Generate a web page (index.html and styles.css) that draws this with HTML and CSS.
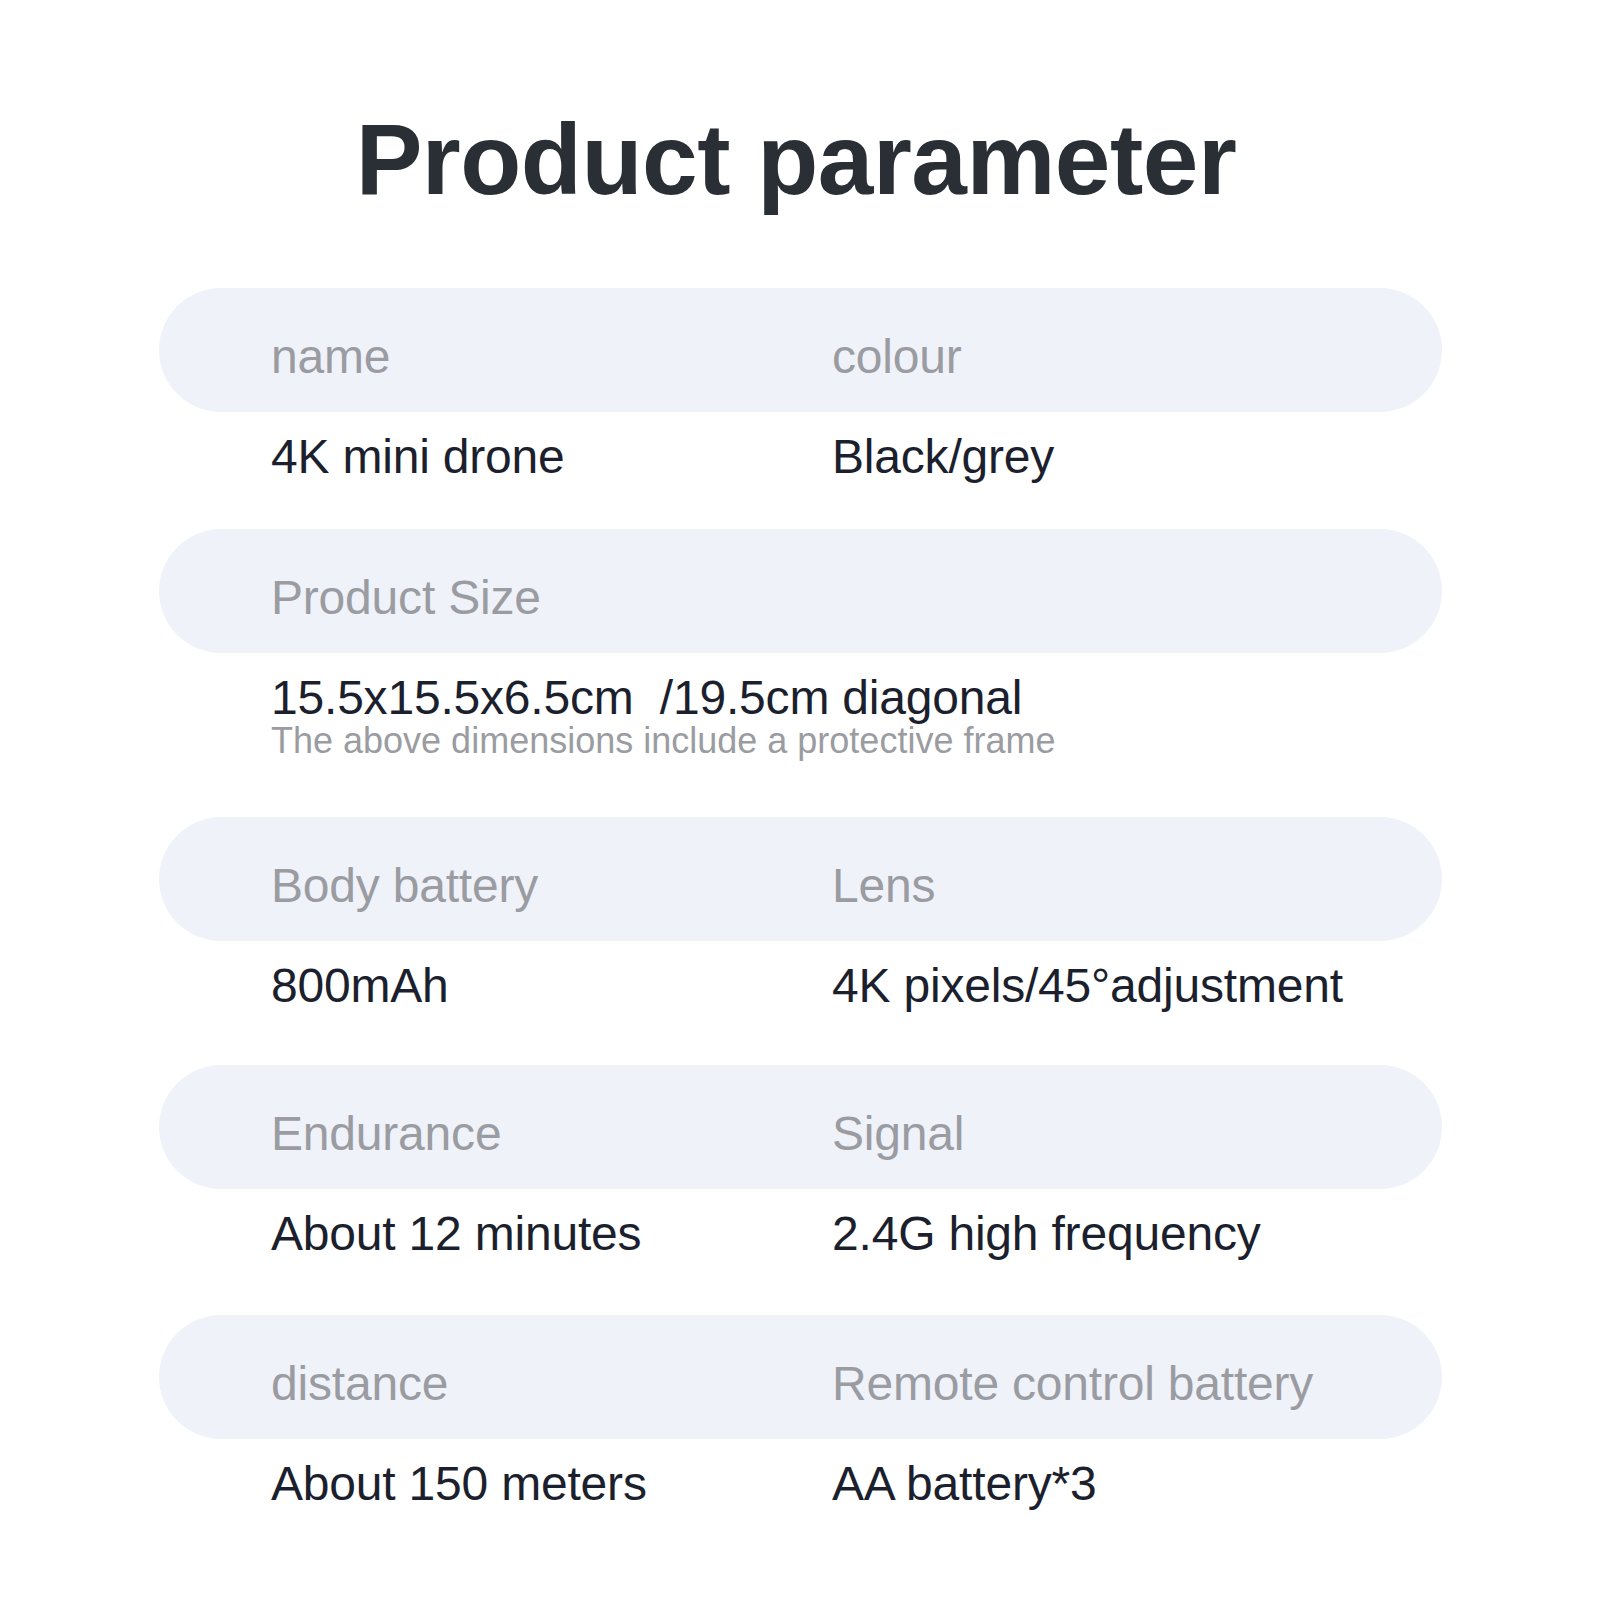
FILE: index.html
```html
<!DOCTYPE html>
<html lang="en">
<head>
<meta charset="utf-8">
<title>Product parameter</title>
<link rel="stylesheet" href="styles.css">
</head>
<body>
<main class="page">
  <h1 class="title">Product parameter</h1>
  <section class="specs">
    <div class="group group--first">
      <div class="pill">
        <span class="label">name</span>
        <span class="label">colour</span>
      </div>
      <div class="values">
        <span class="value">4K mini drone</span>
        <span class="value">Black/grey</span>
      </div>
    </div>
    <div class="group group--size">
      <div class="pill">
        <span class="label">Product Size</span>
      </div>
      <div class="values values--single">
        <span class="value">15.5x15.5x6.5cm&nbsp; /19.5cm diagonal</span>
        <span class="note">The above dimensions include a protective frame</span>
      </div>
    </div>
    <div class="group group--battery">
      <div class="pill">
        <span class="label">Body battery</span>
        <span class="label">Lens</span>
      </div>
      <div class="values">
        <span class="value">800mAh</span>
        <span class="value">4K pixels/45°adjustment</span>
      </div>
    </div>
    <div class="group group--endurance">
      <div class="pill">
        <span class="label">Endurance</span>
        <span class="label">Signal</span>
      </div>
      <div class="values">
        <span class="value">About 12 minutes</span>
        <span class="value">2.4G high frequency</span>
      </div>
    </div>
    <div class="group">
      <div class="pill">
        <span class="label">distance</span>
        <span class="label">Remote control battery</span>
      </div>
      <div class="values">
        <span class="value">About 150 meters</span>
        <span class="value">AA battery*3</span>
      </div>
    </div>
  </section>
</main>
</body>
</html>
```

FILE: styles.css
```css
* { box-sizing: border-box; }

html, body {
  margin: 0;
  padding: 0;
  background: #ffffff;
}

body {
  font-family: "Liberation Sans", Arial, sans-serif;
  width: 1600px;
  min-height: 1600px;
}

.page {
  padding-top: 109px;
}

.title {
  margin: 0;
  padding-right: 8px;
  text-align: center;
  font-size: 100px;
  line-height: 100px;
  font-weight: 700;
  letter-spacing: -0.5px;
  color: #2a2e35;
}

.specs {
  width: 1283px;
  margin: 79px auto 0 159px;
  display: flex;
  flex-direction: column;
}

.group--first { margin-bottom: 48px; }
.group--size { margin-bottom: 59px; }
.group--battery { margin-bottom: 55px; }
.group--endurance { margin-bottom: 57px; }

.pill {
  height: 124px;
  border-radius: 62px;
  background: #eff2f9;
  padding: 45px 0 0 112px;
  display: grid;
  grid-template-columns: 561px 1fr;
  align-items: start;
}

.label {
  font-size: 48px;
  line-height: 48px;
  letter-spacing: -0.2px;
  color: #9a9ca2;
  white-space: nowrap;
}

.values {
  margin-top: 21px;
  padding-left: 112px;
  display: grid;
  grid-template-columns: 561px 1fr;
}

.values--single {
  grid-template-columns: 1fr;
}

.value {
  font-size: 48px;
  line-height: 48px;
  letter-spacing: -0.2px;
  color: #1c1f2d;
  white-space: nowrap;
}

.note {
  margin-top: 1px;
  font-size: 36px;
  line-height: 35px;
  color: #9a9ca2;
  white-space: nowrap;
}
```
